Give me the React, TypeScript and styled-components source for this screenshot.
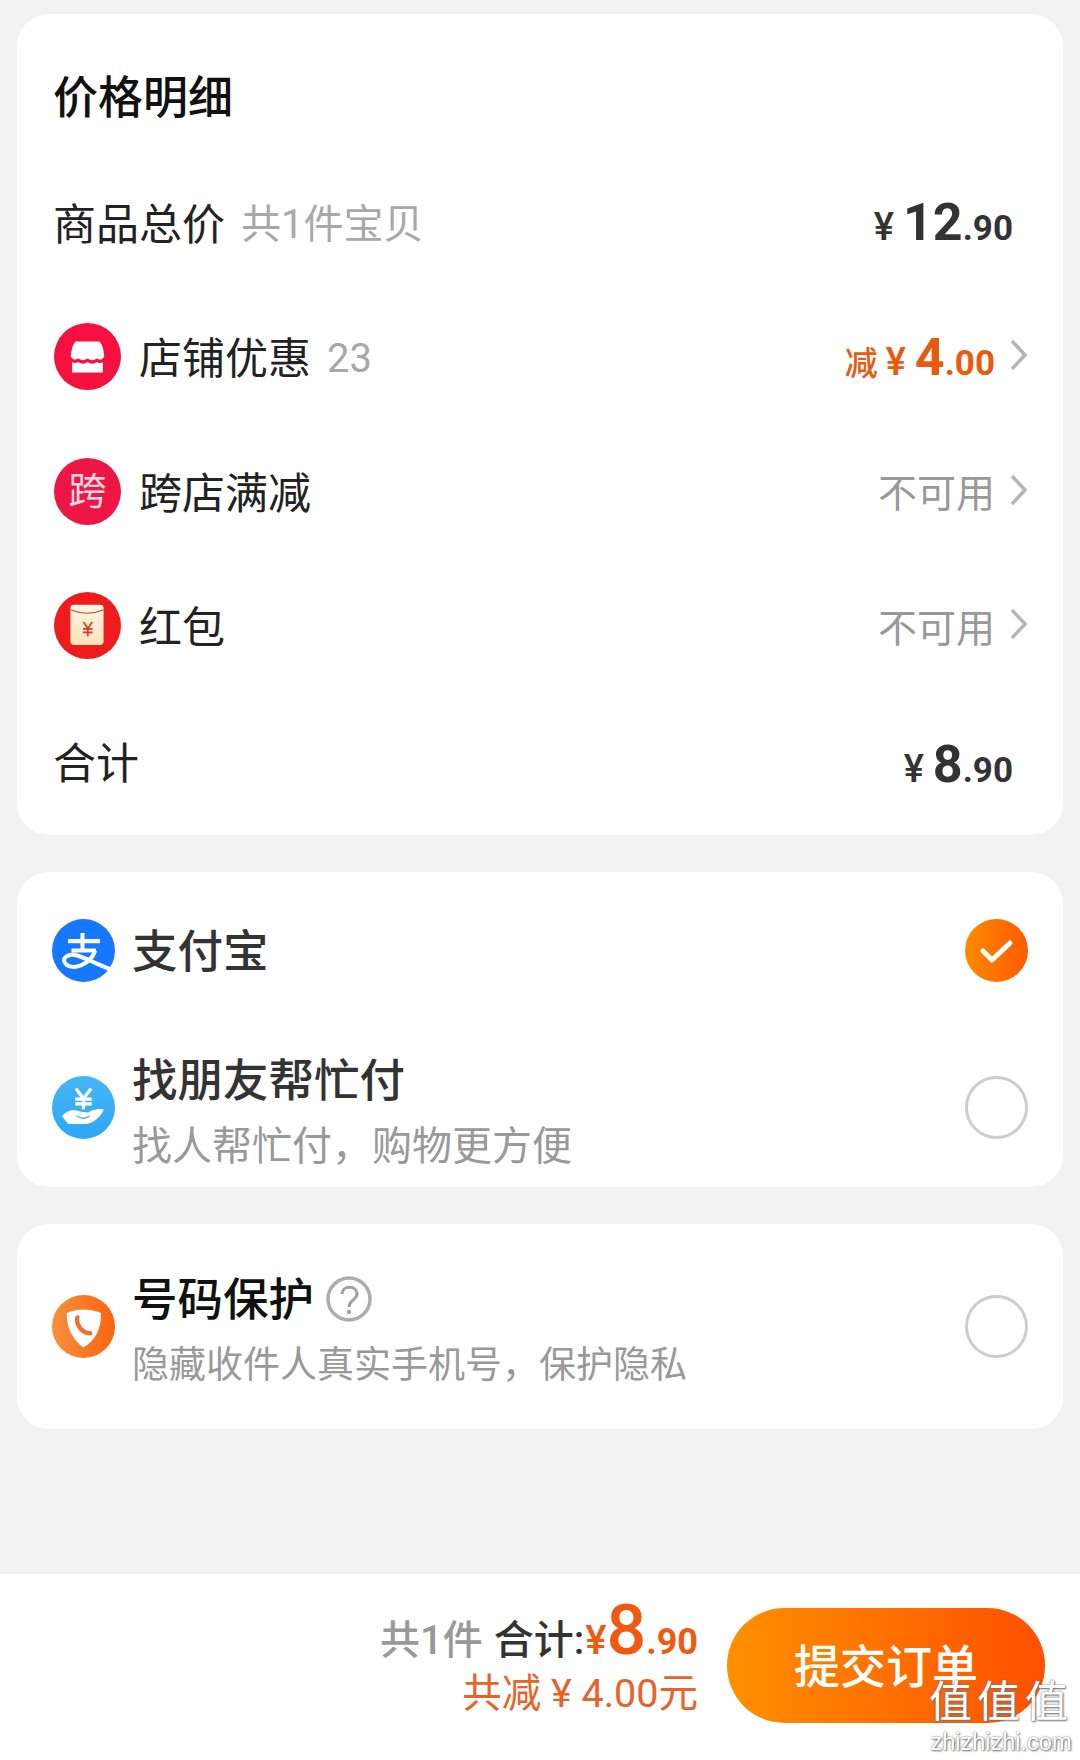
import React from 'react';
import styled, { createGlobalStyle } from 'styled-components';

const GlobalStyle = createGlobalStyle`
    html, body {
        margin: 0;
        padding: 0;
        background: #f2f2f2;
    }
    * {
        box-sizing: border-box;
    }
`;

const FONT = `Roboto, "Noto Sans CJK SC", sans-serif`;

const Page = styled.div`
    position: relative;
    width: 1080px;
    height: 1760px;
    overflow: hidden;
    display: flex;
    flex-direction: column;
    background: #f2f2f2;
    font-family: ${FONT};
`;

const Card = styled.section<{ $top: number }>`
    margin: ${props => props.$top}px 17px 0;
    background: #fff;
    border-radius: 32px;
`;

const PriceTitle = styled.h2`
    margin: 0;
    height: 141px;
    padding: 57px 36px 0;
    font-size: 45px;
    line-height: 56px;
    font-weight: 500;
    color: #111;
`;

const Row = styled.div<{ $tall?: boolean }>`
    height: ${props => props.$tall ? 142 : 134.5}px;
    padding: 0 36px;
    display: flex;
    align-items: center;
`;

const RowLabel = styled.span`
    margin-top: 5px;
    font-size: 43px;
    line-height: 56px;
    color: #222;
`;

const TotalLabel = styled(RowLabel)`
    margin-top: 0;
`;

const RowNote = styled.span`
    margin-top: 5px;
    margin-left: 16px;
    font-size: 40px;
    line-height: 56px;
    color: #a8a8a8;
`;

const RowRight = styled.div<{ $inset?: boolean }>`
    margin-left: auto;
    margin-right: ${props => props.$inset ? 14 : 0}px;
    display: flex;
    align-items: center;
`;

const Unavailable = styled.span`
    margin-top: 6px;
    font-size: 39px;
    line-height: 56px;
    color: #999;
`;

const Amount = styled.span<{ $orange?: boolean }>`
    margin-top: 8px;
    display: inline-flex;
    align-items: baseline;
    color: ${props => props.$orange ? '#e85a10' : '#333'};
    font-family: Roboto, sans-serif;
    font-weight: 700;
    line-height: 56px;
`;

const AmountPrefix = styled.span`
    margin-right: 8px;
    font-family: ${FONT};
    font-size: 33px;
    font-weight: 500;
`;

const Yen = styled.span`
    margin-right: 9px;
    font-size: 38px;
    font-weight: 500;
`;

const Whole = styled.span`
    font-size: 52px;
`;

const Cents = styled.span`
    font-size: 35px;
    font-weight: 700;
`;

const RoundIcon = styled.div<{ $size: number; $color?: string }>`
    flex: none;
    width: ${props => props.$size}px;
    height: ${props => props.$size}px;
    border-radius: 50%;
    background: ${props => props.$color || 'transparent'};
    display: flex;
    align-items: center;
    justify-content: center;
`;

const DiscountIcon = styled(RoundIcon)`
    margin-left: 1px;
    margin-right: 18px;
`;

const KuaGlyph = styled.span`
    color: #fcdbe2;
    font-size: 38px;
    line-height: 1;
`;

const Svg = styled.svg`
    display: block;
    width: 100%;
    height: 100%;
`;

const ChevronBox = styled.span`
    margin-left: 15px;
    width: 17px;
    height: 32px;
    margin-top: -3px;
    display: block;
`;

const PayRow = styled.div<{ $height: number }>`
    height: ${props => props.$height}px;
    padding: 0 35px;
    display: flex;
    align-items: center;
`;

const PayIcon = styled(RoundIcon)`
    margin-right: 17px;
`;

const PayText = styled.div`
    display: flex;
    flex-direction: column;
    padding-top: 8px;
`;

const PayTitleLine = styled.div`
    display: flex;
    align-items: center;
    height: 60px;
`;

const PayTitle = styled.span<{ $dark?: boolean }>`
    font-size: 45.5px;
    line-height: 60px;
    font-weight: 500;
    color: ${props => props.$dark ? '#111' : '#333'};
`;

const AlipayTitle = styled(PayTitle)`
    margin-top: 6px;
`;

const PaySub = styled.span`
    margin-top: 10px;
    font-size: 40px;
    line-height: 50px;
    color: #999;
    white-space: nowrap;
`;

const PhoneSub = styled(PaySub)`
    font-size: 37px;
`;

const HelpIcon = styled.span`
    flex: none;
    margin: -4px 0 0 12px;
    width: 46px;
    height: 46px;
    display: block;
`;

const Radio = styled.span`
    flex: none;
    margin-left: auto;
    width: 63px;
    height: 63px;
    border-radius: 50%;
    border: 3px solid #cdcdcd;
`;

const CheckedRadio = styled.span`
    flex: none;
    margin-left: auto;
    width: 63px;
    height: 63px;
    border-radius: 50%;
    background: linear-gradient(90deg, #ff8a00, #ff5a00);
    padding: 15px 14px;
`;

const Spacer = styled.div`
    flex: 1;
`;

const BottomBar = styled.footer`
    height: 186px;
    padding: 34px 35px 37px 0;
    background: #fff;
    display: flex;
    justify-content: flex-end;
    align-items: center;
    gap: 29px;
`;

const Summary = styled.div`
    margin-bottom: 18px;
    display: flex;
    flex-direction: column;
    align-items: flex-end;
`;

const SummaryLine = styled.div`
    display: flex;
    align-items: baseline;
    height: 72px;
    line-height: 72px;
    font-size: 40px;
    font-weight: 500;
    white-space: nowrap;
`;

const SummaryCount = styled.span`
    margin-right: 11px;
    color: #999;
`;

const SummaryLabel = styled.span`
    color: #333;
`;

const SummaryYen = styled.span`
    margin-left: 1px;
    color: #f05a10;
    font-size: 40px;
`;

const SummaryWhole = styled.span`
    color: #f05a10;
    font-family: Roboto, sans-serif;
    font-size: 70px;
    font-weight: 500;
`;

const SummaryCents = styled.span`
    color: #f05a10;
    font-family: Roboto, sans-serif;
    font-size: 36px;
    font-weight: 700;
`;

const SavedLine = styled.div`
    margin-top: 3px;
    font-size: 39.5px;
    line-height: 50px;
    color: #e8622a;
    white-space: nowrap;
`;

const SubmitButton = styled.button`
    width: 318px;
    height: 115px;
    padding: 0 0 5px;
    border: 0;
    border-radius: 58px;
    background: linear-gradient(90deg, #ff9000, #ff5000);
    color: #fff;
    font-family: ${FONT};
    font-size: 46px;
    font-weight: 500;
`;

const Watermark = styled.div`
    position: absolute;
    right: 6px;
    bottom: 6px;
    width: 146px;
    color: #fff;
    text-align: center;
    text-shadow: 0 0 2px #666, 1px 1px 2px #777;
`;

const WatermarkGlyphs = styled.div`
    font-size: 43px;
    line-height: 50px;
    letter-spacing: 5px;
    white-space: nowrap;
`;

const WatermarkSite = styled.div`
    font-family: "Liberation Sans", sans-serif;
    font-size: 23.5px;
    line-height: 24px;
    margin-top: 3px;
`;

const Chevron = () => (
    <ChevronBox>
        <Svg viewBox="0 0 17 32">
            <path d="M2 2 L15 16 L2 30" fill="none" stroke="#b5b5b5" strokeWidth="3.5" />
        </Svg>
    </ChevronBox>
);

const Price = (props: { whole: string; cents: string; orange?: boolean; prefix?: string }) => (
    <Amount $orange={props.orange}>
        {props.prefix && <AmountPrefix>{props.prefix}</AmountPrefix>}
        <Yen>¥</Yen>
        <Whole>{props.whole}</Whole>
        <Cents>{props.cents}</Cents>
    </Amount>
);

const StoreIcon = () => (
    <Svg viewBox="45 38 196 196">
        <circle cx="143" cy="136" r="98" fill="#f5113f" />
        <path d="M108 92 H178 Q190 105 192 135 Q185 150 170 142 Q157 152 143 142 Q129 152 116 142 Q101 150 94 135 Q96 105 108 92Z" fill="#fff" />
        <path d="M98 153 Q107 158 116 152 Q129 162 143 152 Q157 162 170 152 Q179 158 188 153 V183 H98Z" fill="#fff" />
    </Svg>
);

const RedPacketIcon = () => (
    <Svg viewBox="45 38 196 196">
        <defs>
            <linearGradient id="packet" x1="0" y1="0" x2="0" y2="1">
                <stop offset="0" stopColor="#fdf6e6" />
                <stop offset="1" stopColor="#fbe2b6" />
            </linearGradient>
        </defs>
        <circle cx="143" cy="136" r="98" fill="#ee1c1c" />
        <rect x="93" y="75" width="97" height="118" rx="10" fill="url(#packet)" />
        <path d="M93 90 Q143 110 190 90" fill="none" stroke="#b5483c" strokeWidth="3" />
        <path d="M131 126 L144 144 L157 126 M144 144 V168 M130 146 H158 M130 156 H158" fill="none" stroke="#d83a2a" strokeWidth="5" />
    </Svg>
);

const AlipayIcon = () => (
    <Svg viewBox="37 36 188 188">
        <circle cx="131" cy="130" r="94" fill="#1677ff" />
        <path d="M85 102 H180 M128 78 V130 M95 130 H168" fill="none" stroke="#fff" strokeWidth="12" />
        <path d="M166 130 C150 175 100 188 80 172 C60 155 85 136 112 145 C140 153 180 175 222 190" fill="none" stroke="#fff" strokeWidth="12" />
    </Svg>
);

const FriendPayIcon = () => (
    <Svg viewBox="36 50 190 190">
        <defs>
            <linearGradient id="friend" x1="0" y1="0" x2="0" y2="1">
                <stop offset="0" stopColor="#45b6f2" />
                <stop offset="1" stopColor="#2ea6f7" />
            </linearGradient>
        </defs>
        <circle cx="131" cy="145" r="95" fill="url(#friend)" />
        <path d="M108 88 L131 118 L154 88 M131 118 V150 M106 120 H156 M106 134 H156" fill="none" stroke="#fff" strokeWidth="10" />
        <path d="M66 170 C85 150 105 150 125 158 L145 160 C155 152 175 148 192 150 C185 170 165 190 140 195 L85 195 C78 185 70 178 66 170Z" fill="#fff" />
        <path d="M110 170 C125 180 140 178 150 170" fill="none" stroke="#45b6f2" strokeWidth="4" />
    </Svg>
);

const PhoneGuardIcon = () => (
    <Svg viewBox="36 28 188 188">
        <defs>
            <linearGradient id="guard" x1="0" y1="0" x2="1" y2="0">
                <stop offset="0" stopColor="#f5903e" />
                <stop offset="1" stopColor="#fb6410" />
            </linearGradient>
        </defs>
        <circle cx="130" cy="122" r="94" fill="url(#guard)" />
        <path d="M80 82 C110 68 150 68 182 82 C185 125 165 165 130 185 C100 165 78 125 80 82Z" fill="#fff" />
        <path d="M112 95 C106 115 125 142 150 142" fill="none" stroke="#f0702a" strokeWidth="13" strokeLinecap="round" />
    </Svg>
);

const CheckIcon = () => (
    <Svg viewBox="0 0 35 33">
        <path d="M4 17 L13 26 L31 9" fill="none" stroke="#fff" strokeWidth="5" strokeLinecap="round" strokeLinejoin="round" />
    </Svg>
);

const QuestionIcon = () => (
    <HelpIcon>
        <Svg viewBox="0 0 46 46">
            <circle cx="23" cy="23" r="21" fill="none" stroke="#adadad" strokeWidth="3.5" />
            <path d="M16 18 C16 9 31 9 31 18 C31 24 23 24 23 31" fill="none" stroke="#a0a0a0" strokeWidth="3" />
            <circle cx="23" cy="36" r="2.2" fill="#a0a0a0" />
        </Svg>
    </HelpIcon>
);

const App = () => {
    return (
        <Page>
            <GlobalStyle />
            <Card $top={14}>
                <PriceTitle>价格明细</PriceTitle>
                <Row>
                    <RowLabel>商品总价</RowLabel>
                    <RowNote>共1件宝贝</RowNote>
                    <RowRight $inset>
                        <Price whole="12" cents=".90" />
                    </RowRight>
                </Row>
                <Row>
                    <DiscountIcon $size={67}><StoreIcon /></DiscountIcon>
                    <RowLabel>店铺优惠</RowLabel>
                    <RowNote>23</RowNote>
                    <RowRight>
                        <Price orange prefix="减" whole="4" cents=".00" />
                        <Chevron />
                    </RowRight>
                </Row>
                <Row>
                    <DiscountIcon $size={67} $color="#ee1644"><KuaGlyph>跨</KuaGlyph></DiscountIcon>
                    <RowLabel>跨店满减</RowLabel>
                    <RowRight>
                        <Unavailable>不可用</Unavailable>
                        <Chevron />
                    </RowRight>
                </Row>
                <Row>
                    <DiscountIcon $size={67}><RedPacketIcon /></DiscountIcon>
                    <RowLabel>红包</RowLabel>
                    <RowRight>
                        <Unavailable>不可用</Unavailable>
                        <Chevron />
                    </RowRight>
                </Row>
                <Row $tall>
                    <TotalLabel>合计</TotalLabel>
                    <RowRight $inset>
                        <Price whole="8" cents=".90" />
                    </RowRight>
                </Row>
            </Card>

            <Card $top={37}>
                <PayRow $height={156}>
                    <PayIcon $size={63}><AlipayIcon /></PayIcon>
                    <AlipayTitle>支付宝</AlipayTitle>
                    <CheckedRadio><CheckIcon /></CheckedRadio>
                </PayRow>
                <PayRow $height={159}>
                    <PayIcon $size={63}><FriendPayIcon /></PayIcon>
                    <PayText>
                        <PayTitleLine><PayTitle>找朋友帮忙付</PayTitle></PayTitleLine>
                        <PaySub>找人帮忙付，购物更方便</PaySub>
                    </PayText>
                    <Radio />
                </PayRow>
            </Card>

            <Card $top={37}>
                <PayRow $height={205}>
                    <PayIcon $size={63}><PhoneGuardIcon /></PayIcon>
                    <PayText>
                        <PayTitleLine>
                            <PayTitle $dark>号码保护</PayTitle>
                            <QuestionIcon />
                        </PayTitleLine>
                        <PhoneSub>隐藏收件人真实手机号，保护隐私</PhoneSub>
                    </PayText>
                    <Radio />
                </PayRow>
            </Card>

            <Spacer />

            <BottomBar>
                <Summary>
                    <SummaryLine>
                        <SummaryCount>共1件</SummaryCount>
                        <SummaryLabel>合计:</SummaryLabel>
                        <SummaryYen>¥</SummaryYen>
                        <SummaryWhole>8</SummaryWhole>
                        <SummaryCents>.90</SummaryCents>
                    </SummaryLine>
                    <SavedLine>共减 ¥ 4.00元</SavedLine>
                </Summary>
                <SubmitButton>提交订单</SubmitButton>
            </BottomBar>

            <Watermark>
                <WatermarkGlyphs>值值值</WatermarkGlyphs>
                <WatermarkSite>zhizhizhi.com</WatermarkSite>
            </Watermark>
        </Page>
    );
};

export default App;
